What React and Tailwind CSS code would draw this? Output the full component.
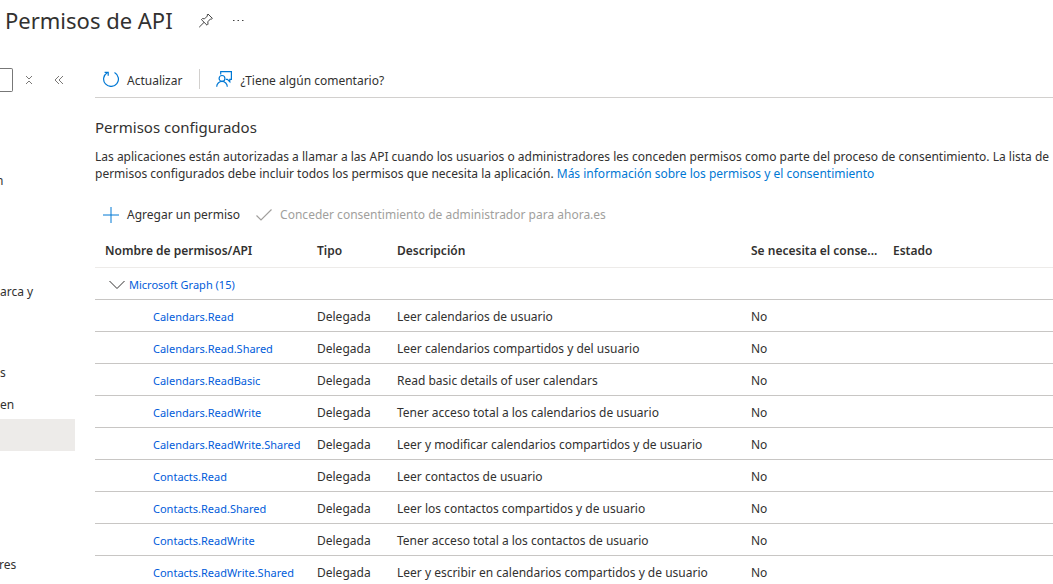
const permissions = [
  ['Calendars.Read', 'Leer calendarios de usuario'],
  ['Calendars.Read.Shared', 'Leer calendarios compartidos y del usuario'],
  ['Calendars.ReadBasic', 'Read basic details of user calendars'],
  ['Calendars.ReadWrite', 'Tener acceso total a los calendarios de usuario'],
  ['Calendars.ReadWrite.Shared', 'Leer y modificar calendarios compartidos y de usuario'],
  ['Contacts.Read', 'Leer contactos de usuario'],
  ['Contacts.Read.Shared', 'Leer los contactos compartidos y de usuario'],
  ['Contacts.ReadWrite', 'Tener acceso total a los contactos de usuario'],
  ['Contacts.ReadWrite.Shared', 'Leer y escribir en calendarios compartidos y de usuario'],
];

function Icon({ className, size = 16, children, strokeWidth = 1 }) {
  return (
    <svg
      className={className}
      width={size}
      height={size}
      viewBox={`0 0 ${size} ${size}`}
      fill="none"
      stroke="currentColor"
      strokeWidth={strokeWidth}
      aria-hidden="true"
    >
      {children}
    </svg>
  );
}

function PageHeader() {
  return (
    <header className="flex h-10 shrink-0 items-center pl-[5px]">
      <h1 className="text-[22px] leading-8 whitespace-nowrap">Permisos de API</h1>
      <button type="button" aria-label="Anclar" className="ml-[25px] text-[#444]">
        <Icon>
          <path d="M10 2 14.4 6.4 13.2 7.2 12.4 7 9.8 9.8 10 12.2 9 13.2 3.4 7.6 4.4 6.6 6.6 6.8 9.4 4 9.2 2.8Z M6 10.4 1.2 15.2" />
        </Icon>
      </button>
      <button type="button" aria-label="Más acciones" className="ml-4 text-[#444]">
        <Icon>
          <path d="M3 8.5h1.5M7.5 8.5h1.5M12 8.5h1.5" />
        </Icon>
      </button>
    </header>
  );
}

function SideItem({ className = '', children }) {
  return (
    <li>
      <a href="#menu" className={`flex h-8 items-center overflow-hidden whitespace-nowrap ${className}`}>
        {children}
      </a>
    </li>
  );
}

function Sidebar() {
  return (
    <aside className="w-[75px] shrink-0">
      <div className="flex h-20 items-center text-[#7a7876]">
        <input
          type="text"
          aria-label="Buscar"
          className="h-6 w-[13px] rounded-r-xs border border-l-0 border-[#777] bg-white"
        />
        <button type="button" aria-label="Contraer grupos" className="ml-2">
          <Icon>
            <path d="M5 4 8 7l3-3M5 12 8 9l3 3" />
          </Icon>
        </button>
        <button type="button" aria-label="Ocultar menú" className="ml-[14px]">
          <Icon>
            <path d="M8 4 4 8l4 4M12 4 8 8l4 4" />
          </Icon>
        </button>
      </div>
      <nav aria-label="Menú" className="pt-11">
        <ul>
          <SideItem className="-ml-1">n</SideItem>
        </ul>
        <ul className="pt-[79px]">
          <SideItem>arca y</SideItem>
        </ul>
        <ul className="pt-[49px]">
          <SideItem>s</SideItem>
          <SideItem>en</SideItem>
        </ul>
        <div className="-mt-px h-8 bg-[#edebe9]" />
        <ul className="pt-[97px]">
          <SideItem className="-ml-px">res</SideItem>
        </ul>
      </nav>
    </aside>
  );
}

function Toolbar() {
  return (
    <div className="flex h-[58px] items-end border-b border-[#d2d0ce] pb-2 whitespace-nowrap">
      <button type="button" className="flex h-5 items-end gap-2 pl-2">
        <Icon className="mb-0.5 text-[#0078d4]">
          <path strokeWidth="1.2" d="M11.5 1.5A7.4 7.4 0 1 1 4.2 1.7M1.6 1.3h3.6v3.4" />
        </Icon>
        Actualizar
      </button>
      <span className="mr-4 ml-[17px] h-5 w-px bg-[#d2d0ce]" />
      <button type="button" className="flex h-5 items-end gap-2">
        <Icon className="mb-0.5 text-[#0078d4]">
          <path strokeWidth="1.2" d="M4.7 3.5V.7h10.7v7.6h-1.6v2.4l-2.4-2.4H9.8" />
          <circle cx="6" cy="7.4" r="2.9" strokeWidth="1.2" />
          <path strokeWidth="1.2" d="M.7 15.7a5.3 5.3 0 0 1 10.6 0" />
        </Icon>
        ¿Tiene algún comentario?
      </button>
    </div>
  );
}

function PermissionTable() {
  return (
    <table className="w-full table-fixed text-left whitespace-nowrap">
      <colgroup>
        <col className="w-[212px]" />
        <col className="w-20" />
        <col className="w-[354px]" />
        <col className="w-[142px]" />
        <col />
      </colgroup>
      <thead>
        <tr className="h-[34px] border-b border-[#edebe9] [&>th]:pt-0.5 [&>th]:pb-0 [&>th]:pl-[10px] [&>th]:font-semibold">
          <th>Nombre de permisos/API</th>
          <th>Tipo</th>
          <th>Descripción</th>
          <th>Se necesita el conse...</th>
          <th>Estado</th>
        </tr>
      </thead>
      <tbody>
        <tr className="h-8 border-b border-[#c8c6c4]">
          <td colSpan={5} className="pt-0.5 pb-0 pl-[14px]">
            <button type="button" className="flex items-center gap-1 text-[11px] text-[#015cda]">
              <Icon className="text-[#323130]">
                <path d="M.5 5 8 12.5 15.5 5" />
              </Icon>
              Microsoft Graph (15)
            </button>
          </td>
        </tr>
        {permissions.map(([name, description]) => (
          <tr key={name} className="h-8 border-b border-[#c8c6c4] [&>td]:pt-0.5 [&>td]:pb-0 [&>td]:pl-[10px]">
            <td>
              <a href="#permiso" className="ml-12 text-[11px] text-[#015cda]">
                {name}
              </a>
            </td>
            <td>Delegada</td>
            <td>{description}</td>
            <td>No</td>
            <td />
          </tr>
        ))}
      </tbody>
    </table>
  );
}

export default function App() {
  return (
    <div className="flex h-screen flex-col overflow-hidden bg-white font-['Segoe_UI','Noto_Sans',sans-serif] text-[12px] leading-[17px] text-[#323130]">
      <PageHeader />
      <div className="flex min-h-0 flex-1 gap-5">
        <Sidebar />
        <main className="min-w-0 flex-1 overflow-hidden">
          <Toolbar />
          <h2 className="pt-[17px] text-[15px] leading-6">Permisos configurados</h2>
          <p className="pt-[9px] whitespace-nowrap">
            Las aplicaciones están autorizadas a llamar a las API cuando los usuarios o administradores les conceden
            permisos como parte del proceso de consentimiento. La lista de
            <br />
            permisos configurados debe incluir todos los permisos que necesita la aplicación.{' '}
            <a href="#informacion" className="text-[#0078d4]">
              Más información sobre los permisos y el consentimiento
            </a>
          </p>
          <div className="flex h-[51px] items-center gap-4 pt-[14px] pl-2 whitespace-nowrap">
            <button type="button" className="flex items-center gap-2">
              <Icon className="text-[#0078d4]">
                <path d="M8 0v16M0 8h16" />
              </Icon>
              Agregar un permiso
            </button>
            <button type="button" disabled className="flex items-center gap-2 text-[#a19f9d]">
              <Icon>
                <path strokeWidth="1.2" d="M.5 8.5 5 13 15.5 2.5" />
              </Icon>
              Conceder consentimiento de administrador para ahora.es
            </button>
          </div>
          <PermissionTable />
        </main>
      </div>
    </div>
  );
}
